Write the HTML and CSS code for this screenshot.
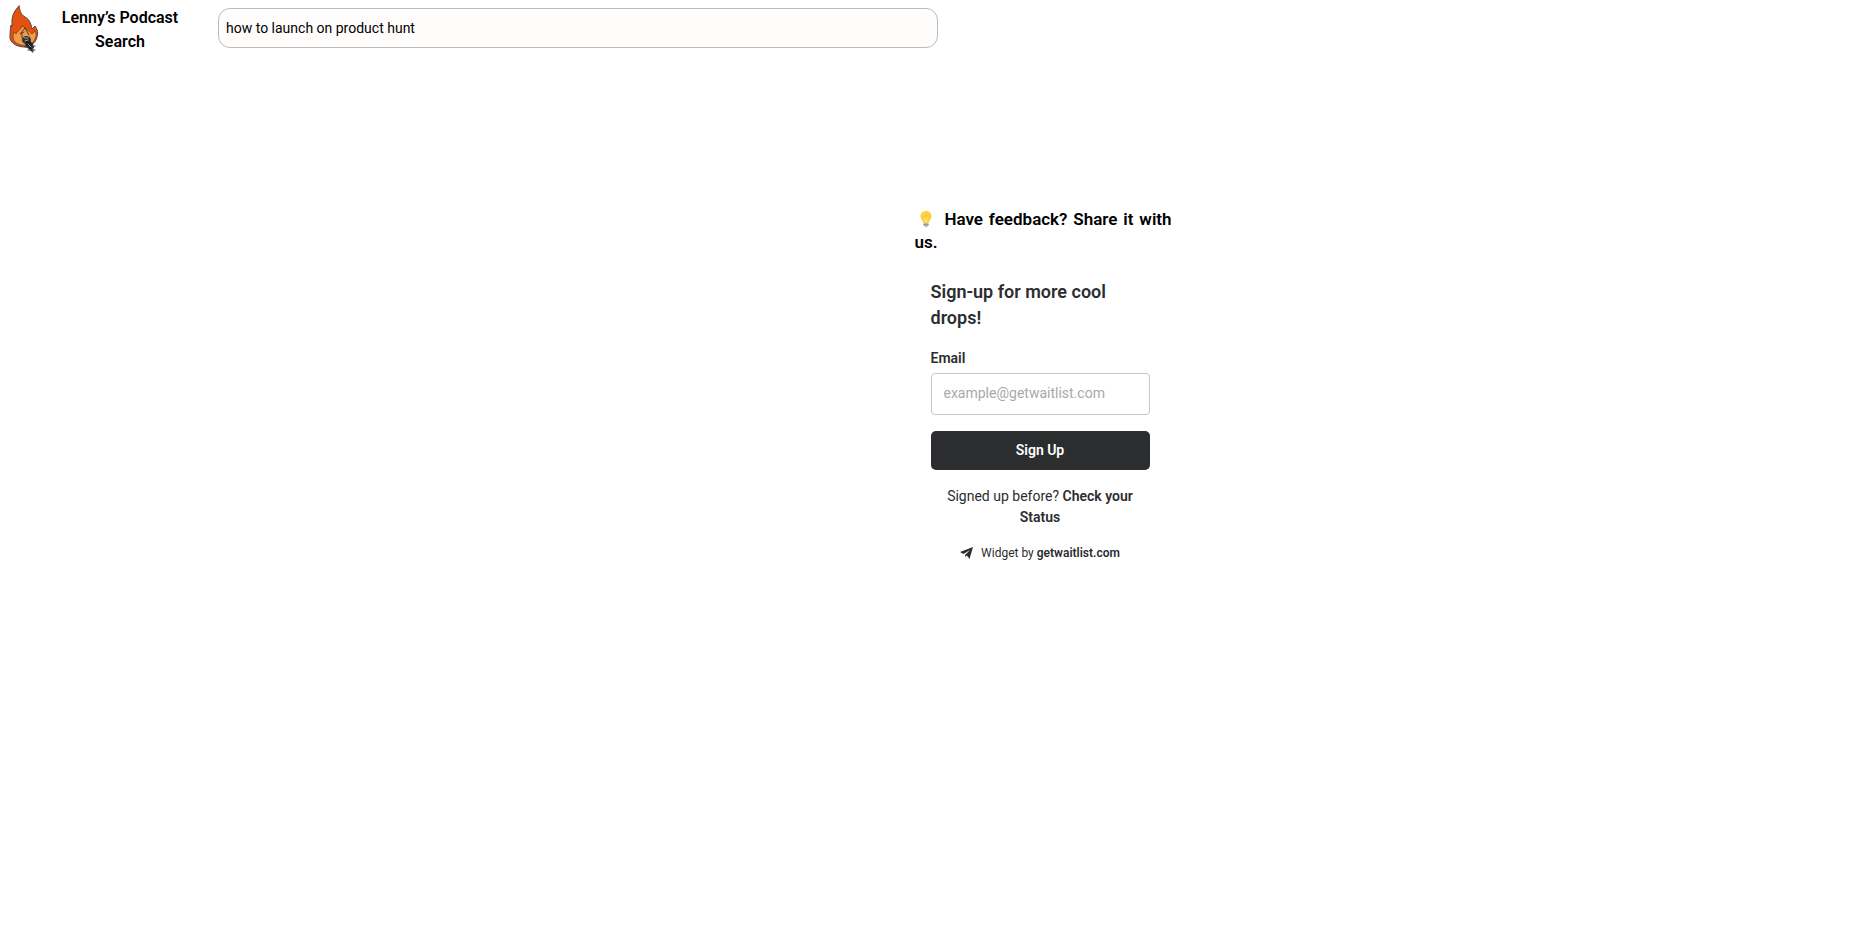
FILE: index.html
```html
<!DOCTYPE html>
<html lang="en">
<head>
    <meta charset="UTF-8">
    <meta name="viewport" content="width=device-width, initial-scale=1.0">
    <title>Lenny’s Podcast Search</title>
    <link rel="stylesheet" href="styles.css">
</head>
<body>
    <header class="header">
        <a class="logo" href="/" aria-label="Home">
            <svg width="48" height="56" viewBox="0 0 48 56" stroke-linejoin="round" stroke-linecap="round">
                <path d="M19 6C15 10 12 15 12 21L12 27 11 25C10 30 10 35 10 38C11 44 18 47 25 47C33 46 37 41 37.500 34C38 30 36 28 35 26L32 29C31 23 29 19 25 17C20 14 20 10 19 6Z" fill="#e5500f" stroke="#55483e" stroke-width="1"/>
                <path d="M22 26C22 29 17 31 16 34L14 32C12 37 13 42 18 44C24 47 33 45 35 39C37 36 36 33 35 31L32 34C30 33 27 28 22 26Z" fill="#f49a4b" stroke="#8a4d20" stroke-width="1"/>
                <path d="M25 28L20 34 24 32M25 28L29 35M22 34L22 38" fill="none" stroke="#5a341b" stroke-width="1"/>
                <ellipse cx="26.500" cy="40" rx="4.500" ry="4" fill="#2b3033"/>
                <path d="M24 38L28 38M25 41L28 40" stroke="#9ba1a4" stroke-width="1"/>
                <path d="M25 42L30 41 33 44 34 48 32 49 33 53 29 49 26 47Z" fill="#1b1e1f"/>
                <path d="M25 47L35 46M28 50L35 50M32 43L33 52" stroke="#33383a" stroke-width="1"/>
                <path d="M28 44L31 47" stroke="#8d9395" stroke-width="1"/>
            </svg>
        </a>
        <h1 class="site-title">Lenny’s Podcast Search</h1>
        <form class="search-form">
            <input class="search-input" type="text" name="q" aria-label="Search" value="how to launch on product hunt">
        </form>
    </header>

    <main class="content">
        <div class="sidebar">
            <p class="feedback">
                <svg class="bulb" width="24" height="18" viewBox="0 0 24 18" role="img" aria-label="Light bulb">
                    <path d="M11 1C7.500 1 5.500 3.500 5.500 6.500C5.500 9 8 10.500 8.500 13L13.500 13C14 10.500 16.500 9 16.500 6.500C16.500 3.500 14.500 1 11 1Z" fill="#fdce35"/>
                    <path d="M8 5C8.500 3.500 9.500 2.500 11 2.500" fill="none" stroke="#ffe680" stroke-width="1" stroke-linecap="round"/>
                    <path d="M9.500 8L10.500 12M12.500 8L11.500 12" stroke="#ffe88a" stroke-width="1"/>
                    <path d="M8.500 13L13.500 13 13.500 15.500 12 17 10 17 8.500 15.500Z" fill="#b4b8bb"/>
                    <path d="M8.500 14.500L13.500 14.500" stroke="#8e9396" stroke-width="1"/>
                </svg>
                Have feedback? Share it with us.
            </p>

            <form class="waitlist">
                <h2 class="waitlist-title">Sign-up for more cool drops!</h2>
                <label class="waitlist-label" for="email">Email</label>
                <input class="waitlist-input" type="email" id="email" name="email" placeholder="example@getwaitlist.com">
                <button class="waitlist-button" type="submit">Sign Up</button>
                <p class="waitlist-status">Signed up before? <a href="#status">Check your Status</a></p>
                <p class="waitlist-credit">
                    <svg width="14" height="14" viewBox="0 0 14 14" fill="#2c2d2f">
                        <path d="M13 1L0 6 3.500 8 10 4 5 9 5.500 11 7 9.500 9.500 13Z"/>
                    </svg>
                    <span>Widget by <a href="#getwaitlist">getwaitlist.com</a></span>
                </p>
            </form>
        </div>
    </main>
</body>
</html>
```

FILE: styles.css
```css
* {
    box-sizing: border-box;
}
body {
    margin: 0;
    font-family: Roboto, sans-serif;
    font-size: 16px;
    line-height: 24px;
    color: #000;
    background-color: #fff;
}
h1,
h2,
p {
    margin: 0;
}
a {
    color: inherit;
    text-decoration: none;
}
input,
button {
    font-family: inherit;
}
.header {
    display: flex;
    align-items: center;
    height: 56px;
}
.logo {
    display: flex;
    flex-shrink: 0;
}
.site-title {
    width: 144px;
    font-size: 16px;
    font-weight: 600;
    text-align: center;
    padding: 4px 8px 0;
}
.search-form {
    flex: 1;
    max-width: 720px;
    margin-left: 26px;
}
.search-input {
    display: block;
    width: 100%;
    height: 40px;
    padding: 0 7px;
    font-size: 14px;
    color: #000;
    background-color: #fefdfc;
    border: 1px solid #bbb;
    border-radius: 12px;
}
.content {
    padding: 152px 16px 0 calc(50% - 21px);
}
.sidebar {
    max-width: 257px;
}
.feedback {
    font-size: 17px;
    font-weight: 600;
    line-height: 23px;
    text-align: justify;
}
.bulb {
    vertical-align: -3px;
}
.waitlist {
    padding: 25px 22px 24px 16px;
    color: #2c2d2f;
}
.waitlist-title {
    font-size: 18px;
    font-weight: 600;
    line-height: 26px;
    margin-bottom: 15px;
}
.waitlist-label {
    display: block;
    font-size: 14px;
    font-weight: 600;
    margin-bottom: 3px;
}
.waitlist-input {
    display: block;
    width: 100%;
    height: 42px;
    padding: 0 12px 2px;
    font-size: 14px;
    color: #2c2d2f;
    background-color: #fff;
    border: 1px solid #c8c8c8;
    border-radius: 4px;
}
.waitlist-input::placeholder {
    color: #a9a9a9;
}
.waitlist-button {
    display: block;
    width: 100%;
    height: 39px;
    margin: 16px 0;
    padding: 0 0 2px;
    font-size: 14px;
    font-weight: 600;
    color: #fff;
    background-color: #2c2d2f;
    border: none;
    border-radius: 5px;
    cursor: pointer;
}
.waitlist-status {
    font-size: 14px;
    line-height: 21px;
    text-align: center;
    padding: 0 8px;
}
.waitlist-credit {
    display: flex;
    align-items: center;
    justify-content: center;
    gap: 7px;
    margin-top: 13px;
    font-size: 12px;
}
.waitlist a {
    font-weight: 600;
}
```
